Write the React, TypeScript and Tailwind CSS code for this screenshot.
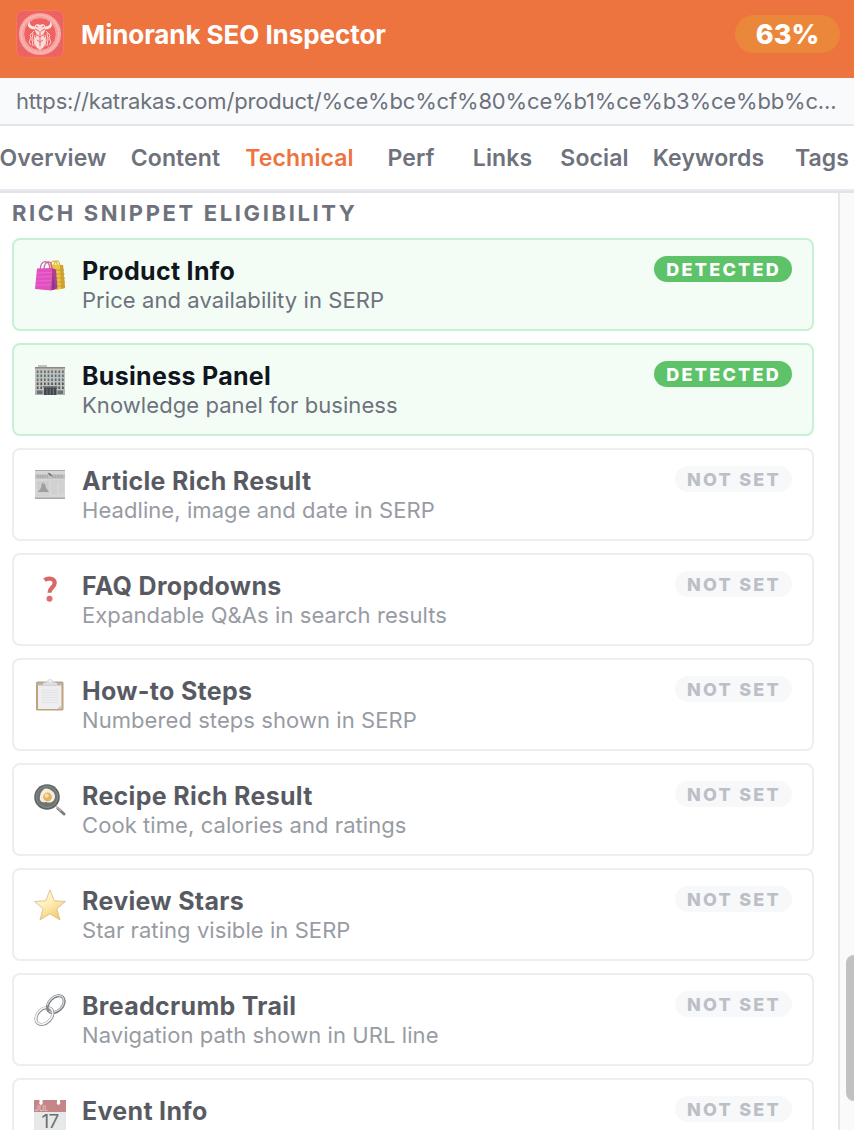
import React from 'react';
import clsx from 'clsx';

type Tab = { label: string; width: string };

const tabs: Tab[] = [
  { label: 'Overview', width: 'w-[130px]' },
  { label: 'Content', width: 'w-[115px]' },
  { label: 'Technical', width: 'w-[133px]' },
  { label: 'Perf', width: 'w-[90px]' },
  { label: 'Links', width: 'w-[93px]' },
  { label: 'Social', width: 'w-[91px]' },
  { label: 'Keywords', width: 'w-[137px]' },
  { label: 'Tags', width: 'w-[90px]' },
];

const BagsIcon = () => (
  <svg viewBox="0 0 32 32" className="size-8">
    <path d="M16 7C17 1 22 0 24 7M20 6c1-6 5-5 6 0" fill="none" stroke="#e2b13c" strokeWidth="1.2" />
    <path d="M15 5.5 29 6l2 23-8 2-8-2z" fill="#edc63f" />
    <path d="m26 6 3 0 2 23-4 1z" fill="#cda237" />
    <path d="M21 11h9M21 15h9.5M22 19h9M22 23h9M22 27h9" stroke="#c99b2f" strokeWidth="1.1" />
    <path d="M6 11C7 0 15 0 16 10M10 10c1-10 8-9 8 0" fill="none" stroke="#cf63aa" strokeWidth="1.2" />
    <path d="m3 9.5 15-.5-1 22.5L1 30z" fill="#e14fc0" />
    <path d="m18 9 4 1.5 1.5 19-6.5 2z" fill="#b13e9b" />
    <path d="m19 14 2.5 16-4 1z" fill="#8b3989" />
    <path d="m3 14 14.5-.5M2.5 18l15-.5M2 22l15-.5M2 26l15 0" stroke="#f074d2" strokeWidth=".7" />
  </svg>
);

const OfficeIcon = () => (
  <svg viewBox="0 0 32 32" className="size-8">
    <path d="M4 1h9v3H4z" fill="#c0c5c4" />
    <path d="M1 3h30v28H1z" fill="#c3c0b7" />
    <path d="M1 3h30v1.500H1z" fill="#8d8982" />
    {[6.5, 10.5, 14.5, 18.5, 22.5].map(y =>
      [2.8, 6.4, 10, 13.6, 17.2, 20.8, 24.4, 28].map(x => (
        <rect key={`${x}-${y}`} x={x} y={y} width="1.7" height="2.5" fill={y < 17 ? '#536f82' : '#465665'} />
      ))
    )}
    <path d="M1 26h30v5H1z" fill="#b2b0aa" />
    <path d="M3 26.500h5.500V30H3zM23.500 26.500H29V30h-5.500z" fill="#66737b" />
    <path d="M10 23h12.500v8H10z" fill="#41474c" />
    <path d="M9 22.200h14.500v1.500H9z" fill="#6d7174" />
    <path d="M13 24.500V31M16.200 24.500V31M19.400 24.500V31" stroke="#7b8990" strokeWidth=".8" />
  </svg>
);

const NewspaperIcon = () => (
  <svg viewBox="0 0 32 32" className="size-8">
    <path d="M1 1h30v29H1z" fill="#c6c6c6" />
    <path d="M1 1h30v1H1zM1 28.500h30V30H1z" fill="#858585" />
    <path d="M1 5h30v5H1z" fill="#aaa" />
    <path d="M3 7.500h11M18 7.500h11" stroke="#888" strokeWidth="2.500" strokeDasharray="2 .5" />
    <path d="m13.500 3.500 3 1 2 3-3-1z" fill="#333" />
    <path d="M3 12h12v12H3z" fill="#b8b8b8" />
    <path d="m4 23 3-4 1-5 3 1 1 4 3 4z" fill="#777" />
    <path d="M17 12h13M17 14h6M17 16h6M17 18h6M17 20h6M17 22h6M17 24h6M25 14h5M25 16h5M25 18h5M25 20h5M25 22h5M25 24h5M3 26h12" stroke="#b0b0b0" strokeWidth=".7" />
  </svg>
);

const QuestionIcon = () => (
  <svg viewBox="0 0 32 32" className="size-8">
    <path d="M10.500 6.200c3.500-2.700 10.200-2 10.200 2.800 0 4.200-5.100 4.500-5.200 9.800" fill="none" stroke="#cb2927" strokeWidth="4.200" />
    <circle cx="15.500" cy="24.800" r="3" fill="#d62f2c" />
  </svg>
);

const ClipboardIcon = () => (
  <svg viewBox="0 0 32 32" className="size-8">
    <rect x="2" y="2.500" width="27.500" height="29" rx="1.500" fill="#a37c44" />
    <path d="M4 4.500h23.500v24L25 30H4z" fill="#e8e8eb" />
    <path d="M3.500 4h24.500v2.500H3.500z" fill="#9998a2" />
    <path d="M9 6V4l4-1c0-4 6-4 6 0l4 1v2z" fill="#d0d1d5" />
    <circle cx="16" cy="2.200" r="1" fill="#fff" />
    <path d="M8 11h16M8 13.500h16M8 16h16M8 18.500h16M8 21h16M8 23.500h16" stroke="#d5d6d9" strokeWidth="1" />
    <path d="m23 30 4.500-4v4z" fill="#b5b7bb" />
  </svg>
);

const PanIcon = () => (
  <svg viewBox="0 0 32 32" className="size-8">
    <path d="m24 24.500 6 5.500" stroke="#4b4541" strokeWidth="3" strokeLinecap="round" />
    <path d="m22 22 5 5" stroke="#999" strokeWidth="1.500" />
    <circle cx="13" cy="13" r="12.800" fill="#1d2322" />
    <circle cx="13" cy="12.800" r="10.800" fill="#343c3a" stroke="#666e6a" strokeWidth=".7" />
    <path d="M10 5c3-1 6 0 8 2 3 2 4 6 2 9-2 3-5 3-8 2-4 1-7-1-6-5 0-3 1-5 4-8z" fill="#eee8da" />
    <circle cx="13.500" cy="13" r="4.400" fill="#d99221" />
    <circle cx="12.700" cy="11.700" r="2.100" fill="#ffd15f" />
  </svg>
);

const StarIcon = () => (
  <svg viewBox="0 0 32 32" className="size-8">
    <defs>
      <linearGradient id="star" x1="0" y1="0" x2=".6" y2="1">
        <stop stopColor="#fffbe0" />
        <stop offset=".5" stopColor="#ffe99c" />
        <stop offset="1" stopColor="#f2b735" />
      </linearGradient>
    </defs>
    <path d="m16 1 4.300 10.800 11.200.7-8.700 7.200L26 31l-10-6.200L6 31l3.200-11.300L.5 12.500l11.200-.7z" fill="url(#star)" stroke="#c79b56" strokeWidth=".8" strokeLinejoin="round" />
  </svg>
);

const LinkIcon = () => (
  <svg viewBox="0 0 32 32" className="size-8">
    <g fill="none" transform="rotate(-45 16 16)">
      <ellipse cx="24.200" cy="16" rx="9.800" ry="6.700" stroke="#3f4449" strokeWidth="3" />
      <ellipse cx="24.200" cy="15.600" rx="9.800" ry="6.700" stroke="#c9cdd1" strokeWidth="1.300" />
      <ellipse cx="7.800" cy="16.300" rx="9.800" ry="6.900" stroke="#53585d" strokeWidth="3" />
      <ellipse cx="7.800" cy="16" rx="9.800" ry="6.900" stroke="#eef0f1" strokeWidth="1.800" />
      <path d="M14.600 16c0-2 1-4 3-5" stroke="#555a5f" strokeWidth="2.600" />
    </g>
  </svg>
);

const CalendarIcon = () => (
  <svg viewBox="0 0 32 32" className="size-8">
    <path d="M0 1h32v31H0z" fill="#dedfe0" />
    <path d="M0 1h32v12H0z" fill="#ad5356" />
    <path d="M5.500 0h3v3a1.800 1.800 0 1 1-3 0zM23 0h3v3a1.800 1.800 0 1 1-3 0z" fill="#fff" />
    <text x="1" y="11.500" fill="#e5bfc0" fontSize="7" fontFamily="Inter">JUL</text>
    <text x="16" y="29" textAnchor="middle" fill="#333" fontSize="19" letterSpacing="-.7" fontFamily="Inter">17</text>
  </svg>
);

type Snippet = {
  title: string;
  description?: string;
  icon: React.FC;
  detected?: boolean;
};

const snippets: Snippet[] = [
  { title: 'Product Info', description: 'Price and availability in SERP', icon: BagsIcon, detected: true },
  { title: 'Business Panel', description: 'Knowledge panel for business', icon: OfficeIcon, detected: true },
  { title: 'Article Rich Result', description: 'Headline, image and date in SERP', icon: NewspaperIcon },
  { title: 'FAQ Dropdowns', description: 'Expandable Q&As in search results', icon: QuestionIcon },
  { title: 'How-to Steps', description: 'Numbered steps shown in SERP', icon: ClipboardIcon },
  { title: 'Recipe Rich Result', description: 'Cook time, calories and ratings', icon: PanIcon },
  { title: 'Review Stars', description: 'Star rating visible in SERP', icon: StarIcon },
  { title: 'Breadcrumb Trail', description: 'Navigation path shown in URL line', icon: LinkIcon },
  { title: 'Event Info', icon: CalendarIcon },
];

const Logo = () => (
  <svg viewBox="0 0 48 48" className="size-12">
    <rect x=".5" y=".5" width="47" height="47" rx="7" fill="#ee6261" stroke="#f07958" />
    <circle cx="24" cy="24" r="18.800" fill="none" stroke="#f7a5a2" strokeWidth="4.500" />
    <circle cx="24" cy="24" r="18.800" fill="none" stroke="#f9bfbc" strokeWidth="1.500" strokeDasharray="1.500 1" />
    <circle cx="24" cy="24" r="16.300" fill="none" stroke="#f9c2bf" strokeWidth=".7" />
    <path d="M20 16.500c-5 0-7-2-6-5.500-4 4-2 8 5 8.500M28 16.500c5 0 7-2 6-5.500 4 4 2 8-5 8.500" fill="#fde5e3" />
    <path d="m19 15 3-1 2 1 2-1 3 1v6l-2 4 3 5-2 7-4 3-4-3-2-7 3-5-2-4z" fill="#fbdad7" />
    <path d="m19 19 4 2m6-2-4 2m-4 4 3 2 3-2m-6 5 3 2 3-2m-3-9v15M20 16l2 1m6-1-2 1" stroke="#e95e5e" strokeWidth=".9" fill="none" />
    <path d="m18 21-4 4 1 3-2 4 2 3m15-14 4 4-1 3 2 4-2 3M17 23l-1 6 1 7m14-13 1 6-1 7M19 25l-1 5 1 6m10-11 1 5-1 6" fill="none" stroke="#fad2cf" strokeWidth="1" />
  </svg>
);

const SnippetCard: React.FC<{ snippet: Snippet }> = ({ snippet }) => {
  const { title, description, icon: Icon, detected } = snippet;
  return (
    <div
      className={clsx(
        'flex h-[93px] shrink-0 items-start rounded-lg border-2 px-5',
        detected ? 'border-[#c5f2d3] bg-[#f3fdf6]' : 'border-gray-200 bg-white opacity-70'
      )}
    >
      <div className="mt-[19px] w-12 shrink-0">
        <Icon />
      </div>
      <div className="mt-4 flex-1">
        <div className="text-[25px] font-bold leading-[31px] tracking-[0.3px] text-[#111520]">{title}</div>
        {description && <div className="-mt-px text-[22px] leading-7 tracking-[0.07px] text-[#6d727c]">{description}</div>}
      </div>
      <span
        className={clsx(
          'mt-4 h-[26px] rounded-full pl-3 pr-[11px] text-[18px] font-extrabold leading-[27px]',
          detected ? 'bg-[#5dc268] tracking-[2.25px] text-white' : 'bg-[#f5f6f8] tracking-[2.25px] text-[#a0a4ad]'
        )}
      >
        {detected ? 'DETECTED' : 'NOT SET'}
      </span>
    </div>
  );
};

export default function App() {
  return (
    <div className="flex h-[1130px] w-[854px] flex-col overflow-hidden bg-white font-['Inter',sans-serif]">
      <header className="flex h-[78px] shrink-0 items-start bg-[#ed743f] px-4 pr-[14px]">
        <div className="mt-[10px]">
          <Logo />
        </div>
        <h1 className="ml-[17px] mt-4 flex-1 text-[26px] font-bold leading-[38px] tracking-[-0.06px] text-white">Minorank SEO Inspector</h1>
        <span className="mt-[15px] h-[38px] w-[105px] rounded-full bg-[#eb873b] text-center text-[27px] font-extrabold leading-[40px] text-white">63%</span>
      </header>

      <div className="h-12 shrink-0 whitespace-nowrap border-b-2 border-[#e4e6ea] bg-[#f9fafc] px-4 text-[22px] leading-[46px] tracking-[-0.17px] text-[#6d727c]">
        https://katrakas.com/product/%ce%bc%cf%80%ce%b1%ce%b3%ce%bb%c...
      </div>

      <nav className="-ml-3 flex h-[65px] shrink-0 border-b-2 border-[#e9eaed]">
        {tabs.map(tab => (
          <button
            key={tab.label}
            className={clsx(
              'shrink-0 pt-px text-center text-[23px] font-semibold tracking-[0.12px]',
              tab.width,
              tab.label === 'Technical' ? 'text-[#ed743f]' : 'text-[#6d727c]'
            )}
          >
            {tab.label}
          </button>
        ))}
      </nav>

      <main className="flex min-h-0 flex-1 border-t-2 border-[#e1e3e8]">
        <section className="flex w-[838px] shrink-0 flex-col overflow-hidden pl-3 pr-6">
          <h2 className="mb-[10px] mt-[5px] text-[22px] font-bold leading-[30px] tracking-[2.62px] text-[#6d727c]">RICH SNIPPET ELIGIBILITY</h2>
          <div className="flex flex-col gap-3">
            {snippets.map(snippet => (
              <SnippetCard key={snippet.title} snippet={snippet} />
            ))}
          </div>
        </section>
        {/* Scrollbar gutter */}
        <div className="w-4 shrink-0 overflow-hidden border-l-2 border-[#e8e8e8] bg-[#fafafa] pl-1.5">
          <div className="mt-[762px] h-[146px] w-4 rounded-lg bg-[#c1c1c1]" />
        </div>
      </main>
    </div>
  );
}
